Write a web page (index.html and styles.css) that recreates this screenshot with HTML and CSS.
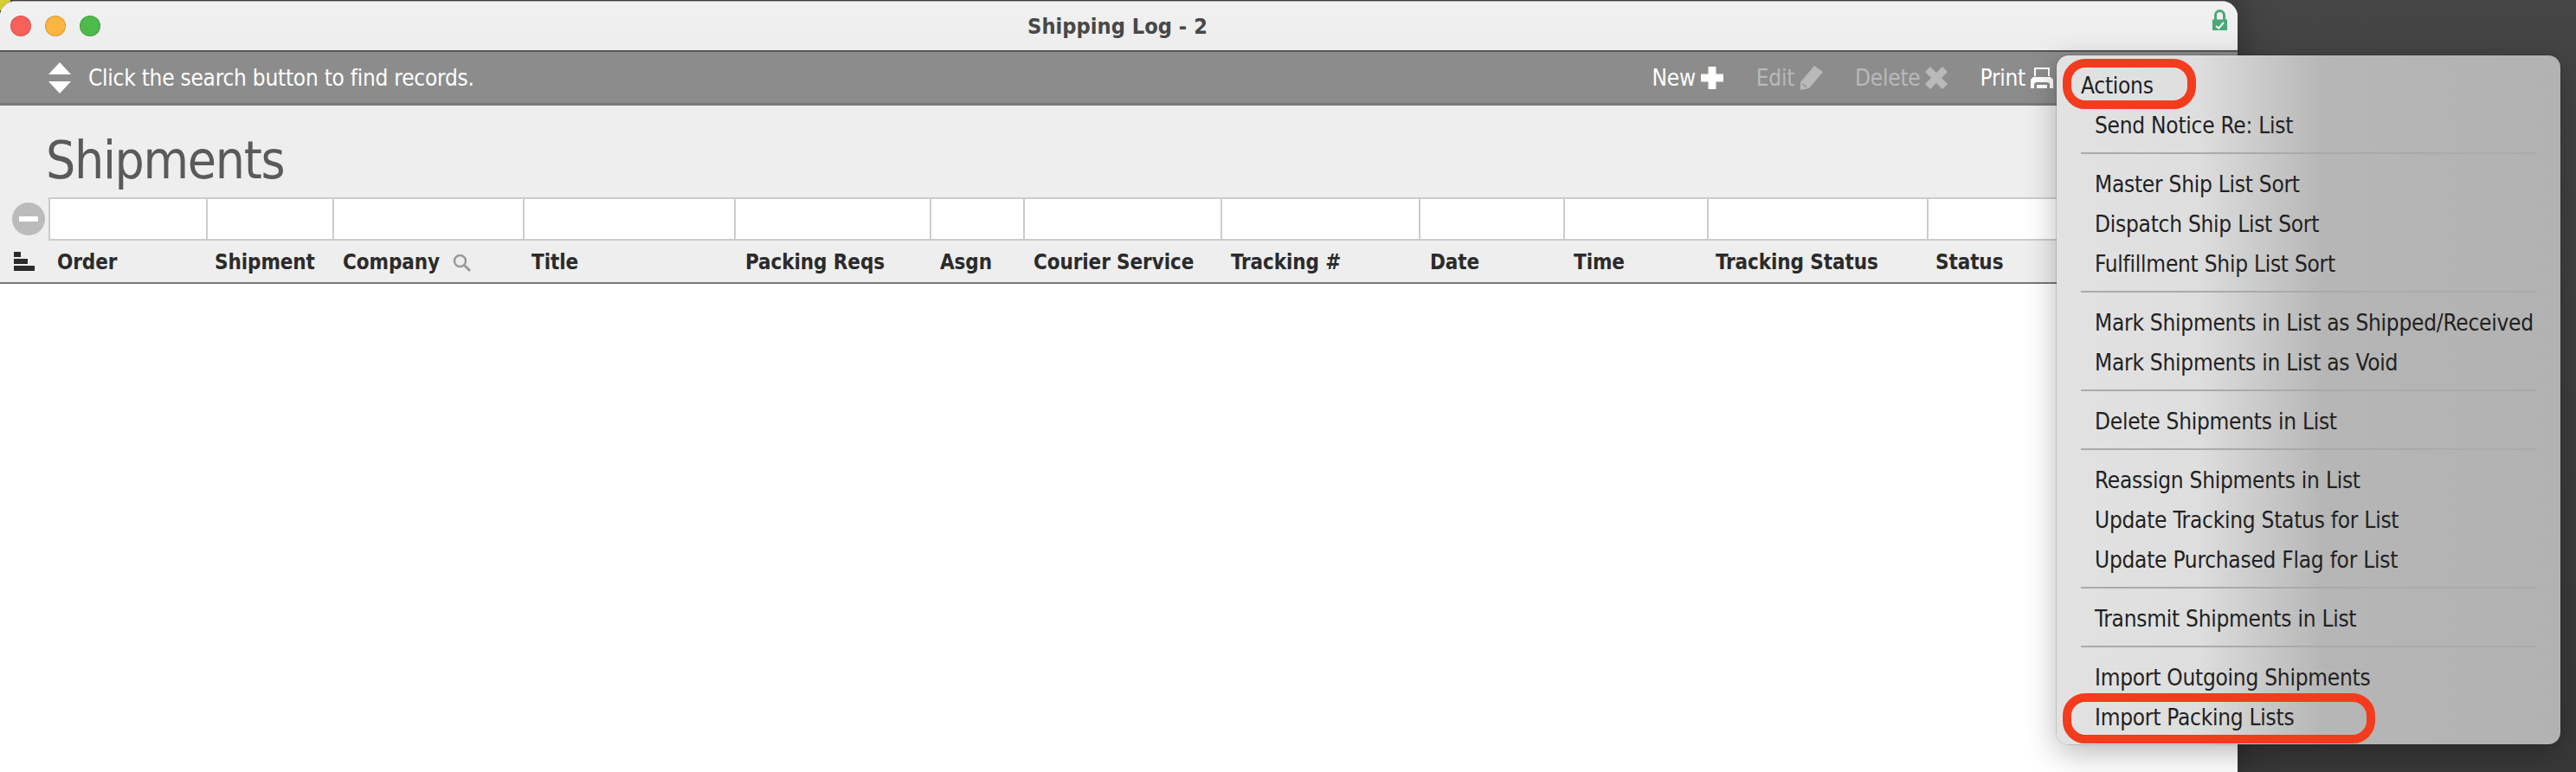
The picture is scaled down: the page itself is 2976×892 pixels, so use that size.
FILE: index.html
```html
<!DOCTYPE html>
<html lang="en">
<head>
    <meta charset="UTF-8">
    <title>Shipping Log - 2</title>
    <link rel="stylesheet" href="styles.css">
</head>
<body>

    <div class="corner-mark"></div>

    <div class="window">
        <div class="titlebar">
            <div class="lights">
                <span class="light red"></span>
                <span class="light orange"></span>
                <span class="light green"></span>
            </div>
            <span class="title">Shipping Log - 2</span>
            <svg class="lock" width="17" height="24" viewBox="0 0 17 24">
                <path d="M3.500 12V6.500a5 5 0 0 1 10 0V12" fill="none" stroke="#4aa876" stroke-width="3"/>
                <rect x="0" y="11.500" width="17" height="12.500" fill="#4aa876"/>
                <path d="M4 19l3.300 2.700L13 15" fill="none" stroke="#fff" stroke-width="2"/>
            </svg>
        </div>

        <div class="toolbar">
            <svg class="arrows" width="26" height="36" viewBox="0 0 26 36">
                <path d="M13 0L26 14H0z M0 22H26L13 36z" fill="#fff"/>
            </svg>
            <span class="status-text">Click the search button to find records.</span>
            <div class="tools">
                <span class="tool tool-new">New
                    <svg width="26" height="26" viewBox="0 0 26 26"><path d="M8.500 0h9v8.500H26v9h-8.500V26h-9v-8.500H0v-9h8.500z" fill="#fff"/></svg>
                </span>
                <span class="tool tool-edit off">Edit
                    <svg width="27" height="28" viewBox="0 0 27 28"><path d="M17 0l10 7L11 26l-10 2 0-9z" fill="#b9b9b9"/><path d="M3 21l5 3.500" stroke="#8c8c8c" stroke-width="1.500"/></svg>
                </span>
                <span class="tool tool-delete off">Delete
                    <svg width="26" height="26" viewBox="0 0 26 26"><path d="M6 0l7 7 7-7 6 6-7 7 7 7-6 6-7-7-7 7-6-6 7-7-7-7z" fill="#b9b9b9"/></svg>
                </span>
                <span class="tool tool-print">Print
                    <svg width="26" height="24" viewBox="0 0 26 24"><path d="M5 10V1h16v9" fill="none" stroke="#fff" stroke-width="2"/><path d="M0 24V14l3-3h20l3 3v10h-4v-4q0-3-3-3H7q-3 0-3 3v4zM7 20h12v4H7z" fill="#fff"/></svg>
                </span>
            </div>
        </div>

        <div class="head">
            <h1 class="heading">Shipments</h1>

            <div class="search-row">
                <div class="remove-cell"><span class="remove"><span class="remove-bar"></span></span></div>
                <div class="field"></div>
                <div class="field"></div>
                <div class="field"></div>
                <div class="field"></div>
                <div class="field"></div>
                <div class="field"></div>
                <div class="field"></div>
                <div class="field"></div>
                <div class="field"></div>
                <div class="field"></div>
                <div class="field"></div>
                <div class="field"></div>
            </div>

            <div class="col-row">
                <div class="sort-cell">
                    <svg width="24" height="22" viewBox="0 0 24 22"><path d="M0 0h8v6H0zM0 8h16v6H0zM0 16h24v6H0z" fill="#2b2b2b"/></svg>
                </div>
                <div>Order</div>
                <div>Shipment</div>
                <div class="company">Company
                    <svg width="22" height="21" viewBox="0 0 22 21"><circle cx="8.500" cy="8.500" r="6.500" fill="none" stroke="#999" stroke-width="2.500"/><path d="M13.500 13.500L20 20" stroke="#999" stroke-width="3"/></svg>
                </div>
                <div>Title</div>
                <div>Packing Reqs</div>
                <div>Asgn</div>
                <div>Courier Service</div>
                <div>Tracking #</div>
                <div>Date</div>
                <div>Time</div>
                <div>Tracking Status</div>
                <div>Status</div>
            </div>
        </div>
    </div>

    <div class="menu">
        <div class="item item-top ringed ring-short">Actions</div>
        <div class="item">Send Notice Re: List</div>
        <hr>
        <div class="item">Master Ship List Sort</div>
        <div class="item">Dispatch Ship List Sort</div>
        <div class="item">Fulfillment Ship List Sort</div>
        <hr>
        <div class="item">Mark Shipments in List as Shipped/Received</div>
        <div class="item">Mark Shipments in List as Void</div>
        <hr>
        <div class="item">Delete Shipments in List</div>
        <hr>
        <div class="item">Reassign Shipments in List</div>
        <div class="item">Update Tracking Status for List</div>
        <div class="item">Update Purchased Flag for List</div>
        <hr>
        <div class="item">Transmit Shipments in List</div>
        <hr>
        <div class="item">Import Outgoing Shipments</div>
        <div class="item ringed ring-long">Import Packing Lists</div>
    </div>

</body>
</html>
```

FILE: styles.css
```css
body {
    margin: 0;
    height: 892px;
    overflow: hidden;
    background: linear-gradient(#454545, #383838);
    font-family: 'DejaVu Sans', 'Liberation Sans', sans-serif;
    font-stretch: condensed;
}

.corner-mark {
    position: absolute;
    left: 0;
    top: 0;
    width: 12px;
    height: 12px;
    background-color: #efe23c;
}

.window {
    position: relative;
    width: 2585px;
    height: 890px;
    margin-top: 1px;
    background-color: #fff;
    border-top: 1px solid #b8b8b8;
    border-radius: 18px 18px 0 0;
    box-shadow: 0 0 40px rgba(0, 0, 0, 0.35);
    overflow: hidden;
}

.titlebar {
    display: flex;
    align-items: center;
    justify-content: center;
    height: 56px;
    background: linear-gradient(#f1f1f1, #ededed);
    position: relative;
}

.lights {
    position: absolute;
    left: 12px;
    top: 16px;
    display: flex;
    gap: 16px;
}

.light {
    width: 22px;
    height: 22px;
    border-radius: 50%;
    border: 1px solid rgba(0, 0, 0, 0.15);
}

.red { background-color: #f8605a; }
.orange { background-color: #fcb540; }
.green { background-color: #4cbb4c; }

.title {
    font-size: 25.200px;
    font-weight: bold;
    margin-right: 3px;
    color: #484848;
}

.lock {
    position: absolute;
    right: 12px;
    top: 9px;
}

.toolbar {
    display: flex;
    align-items: center;
    box-sizing: border-box;
    height: 64px;
    padding-left: 56px;
    padding-right: 213px;
    background-color: #8c8c8c;
    border-top: 2px solid #555;
    border-bottom: 3px solid #797979;
    color: #fff;
    font-size: 26px;
    letter-spacing: -0.250px;
}

.status-text {
    margin-left: 20px;
}

.tools {
    margin-left: auto;
    display: flex;
    align-items: center;
}

.tool {
    display: flex;
    align-items: center;
    gap: 6px;
}

.off {
    color: #b9b9b9;
}

.tool-new { margin-right: 38px; }
.tool-edit { margin-right: 37px; }
.tool-delete { margin-right: 37px; }

.head {
    background-color: #eee;
    border-bottom: 2px solid #777;
}

.heading {
    margin: 0;
    height: 106px;
    padding-left: 53px;
    box-sizing: border-box;
    padding-top: 27px;
    font-size: 60px;
    line-height: 72px;
    font-weight: normal;
    letter-spacing: -1.300px;
    color: #5a5a5a;
}

.search-row {
    display: grid;
    grid-template-columns: 56px 184px 146px 220px 244px 226px 108px 228px 229px 167px 166px 254px 357px;
    height: 50px;
}

.remove-cell {
    display: flex;
    align-items: center;
    padding-left: 14px;
}

.remove {
    display: flex;
    align-items: center;
    justify-content: center;
    width: 38px;
    height: 38px;
    border-radius: 50%;
    background-color: #bbb;
}

.remove-bar {
    width: 22px;
    height: 6px;
    background-color: #fff;
}

.field {
    background-color: #fff;
    border: 2px solid #ccc;
    border-left-width: 0;
}

.remove-cell + .field {
    border-left-width: 2px;
}

.col-row {
    display: grid;
    grid-template-columns: 66px 182px 148px 218px 247px 225px 108px 228px 230px 166px 164px 254px 100px;
    align-items: center;
    box-sizing: border-box;
    height: 48px;
    padding-top: 2px;
    font-size: 24px;
    font-weight: bold;
    letter-spacing: -0.100px;
    color: #2b2b2b;
}

.sort-cell {
    display: flex;
    padding-left: 16px;
    margin-top: -2px;
}

.company {
    display: flex;
    align-items: center;
    gap: 15px;
}

.menu {
    position: absolute;
    left: 2376px;
    top: 64px;
    width: 582px;
    height: 796px;
    box-sizing: border-box;
    padding: 11px 28px 9px 28px;
    border-radius: 14px;
    background: linear-gradient(90deg, #e2e2e2 0%, #dedede 28%, #b6b6b6 53%, #b2b2b2 100%);
    box-shadow: 0 0 0 1px rgba(0, 0, 0, 0.12), 0 10px 36px rgba(0, 0, 0, 0.28);
    font-size: 26px;
    letter-spacing: -0.250px;
    color: #222;
}

.item {
    display: flex;
    align-items: center;
    box-sizing: border-box;
    height: 46px;
    padding-top: 2px;
    padding-left: 16px;
    white-space: nowrap;
    position: relative;
}

.item-top {
    padding-left: 0;
}

.menu hr {
    height: 2px;
    margin: 9px 0 11px 0;
    border: 0;
    background-color: #aaa;
}

.ringed::after {
    content: "";
    position: absolute;
    left: -21px;
    border: 10px solid #f33c1e;
    border-radius: 26px;
}

.ring-short::after {
    top: -7px;
    bottom: -5px;
    width: 134px;
}

.ring-long::after {
    top: -4px;
    bottom: -8px;
    width: 341px;
}
```
